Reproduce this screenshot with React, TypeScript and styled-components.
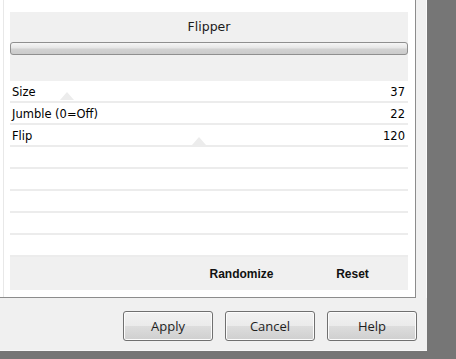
import React from 'react'
import styled, { createGlobalStyle } from 'styled-components'

const GlobalStyle = createGlobalStyle`
    html, body {
        margin: 0;
        padding: 0;
        background: #767676;
    }
    body {
        font-family: Tahoma, "DejaVu Sans", "Liberation Sans", sans-serif;
    }
`

interface Row {
    label: string
    value: string
}

const ROWS: Row[] = [
    { label: 'Size', value: '37' },
    { label: 'Jumble (0=Off)', value: '22' },
    { label: 'Flip', value: '120' },
    { label: '', value: '' },
    { label: '', value: '' },
    { label: '', value: '' },
    { label: '', value: '' },
    { label: '', value: '' },
]

const Screen = styled.div`
    width: 456px;
    height: 359px;
    background: #767676;
    overflow: hidden;
`

const Dialog = styled.div`
    width: 427px;
    height: 350px;
    background: #f0f0f0;
    border-bottom: 1px solid #f8f8f8;
    display: flex;
    flex-direction: column;
    position: relative;
`

const Edge = styled.div`
    display: flex;
    height: 298px;
    flex-shrink: 0;
`

const Panel = styled.div`
    width: 412px;
    height: 297px;
    flex-shrink: 0;
    background: #ffffff;
    border-right: 1px solid #8c8c8c;
    border-bottom: 1px solid #8c8c8c;
    padding-left: 3px;
    display: flex;
`

const Inner = styled.div`
    flex: 1;
    min-width: 0;
    border-left: 1px solid #e8e8e8;
    padding: 12px 7px 7px 6px;
    display: flex;
    flex-direction: column;
`

const Side = styled.div`
    width: 9px;
    margin-left: 1px;
    flex-shrink: 0;
    background: #f0f0f0;
    border-right: 1px solid #fafafa;
`

const Header = styled.div`
    height: 70px;
    background: #f0f0f0;
    display: flex;
    flex-direction: column;
`

const Title = styled.div`
    height: 30px;
    line-height: 30px;
    text-align: center;
    font-family: "DejaVu Sans", "Liberation Sans", sans-serif;
    font-size: 12.5px;
    color: #1a1a1a;
`

const Track = styled.div`
    height: 11px;
    border: 1px solid #8f8f8f;
    border-radius: 3px;
    background: linear-gradient(to bottom, #f6f6f6 0%, #e6e6e6 45%, #d2d2d2 55%, #cbcbcb 100%);
`

const List = styled.div`
    display: flex;
    flex-direction: column;
    position: relative;
`

const RowLine = styled.div`
    height: 18px;
    padding: 2px 3px 0 2px;
    border-bottom: 2px solid #ececec;
    display: flex;
    align-items: center;
    justify-content: space-between;
    font-family: Tahoma, "DejaVu Sans", "Liberation Sans", sans-serif;
    font-size: 11.5px;
    color: #000;
`

const Marker = styled.div<{ $x: number; $y: number }>`
    position: absolute;
    left: ${(p) => p.$x}px;
    top: ${(p) => p.$y}px;
    width: 0;
    height: 0;
    border-left: 7px solid transparent;
    border-right: 7px solid transparent;
    border-bottom: 8px solid #ececec;
`

const ActionBar = styled.div`
    height: 33px;
    background: #f0f0f0;
    display: flex;
    justify-content: flex-end;
    align-items: center;
`

const Action = styled.div`
    width: 111px;
    text-align: center;
    font-family: "Liberation Sans", Arial, sans-serif;
    font-weight: bold;
    font-size: 12px;
    color: #111;
`

const Buttons = styled.div`
    display: flex;
    justify-content: flex-end;
    gap: 12px;
    padding: 13px 10px 0 0;
`

const Button = styled.button`
    width: 90px;
    height: 30px;
    border: 1px solid #707070;
    border-radius: 3px;
    background: linear-gradient(to bottom, #f2f2f2 0%, #ebebeb 50%, #dddddd 51%, #cfcfcf 100%);
    font-family: "Open Sans", "Segoe UI", "DejaVu Sans", sans-serif;
    font-size: 13px;
    color: #1e1e1e;
    padding: 0;
    box-shadow: inset 0 0 0 1px #fcfcfc;
`

const App: React.FC = () => {
    return (
        <>
            <GlobalStyle />
            <Screen>
                <Dialog>
                    <Edge>
                        <Panel>
                            <Inner>
                                <Header>
                                    <Title>Flipper</Title>
                                    <Track />
                                </Header>
                                <List>
                                    <Marker $x={50} $y={11} />
                                    <Marker $x={182} $y={56} />
                                    {ROWS.map((row, i) => (
                                        <RowLine key={i}>
                                            <span>{row.label}</span>
                                            <span>{row.value}</span>
                                        </RowLine>
                                    ))}
                                </List>
                                <ActionBar>
                                    <Action>Randomize</Action>
                                    <Action>Reset</Action>
                                </ActionBar>
                            </Inner>
                        </Panel>
                        <Side />
                    </Edge>
                    <Buttons>
                        <Button>Apply</Button>
                        <Button>Cancel</Button>
                        <Button>Help</Button>
                    </Buttons>
                </Dialog>
            </Screen>
        </>
    )
}

export default App
